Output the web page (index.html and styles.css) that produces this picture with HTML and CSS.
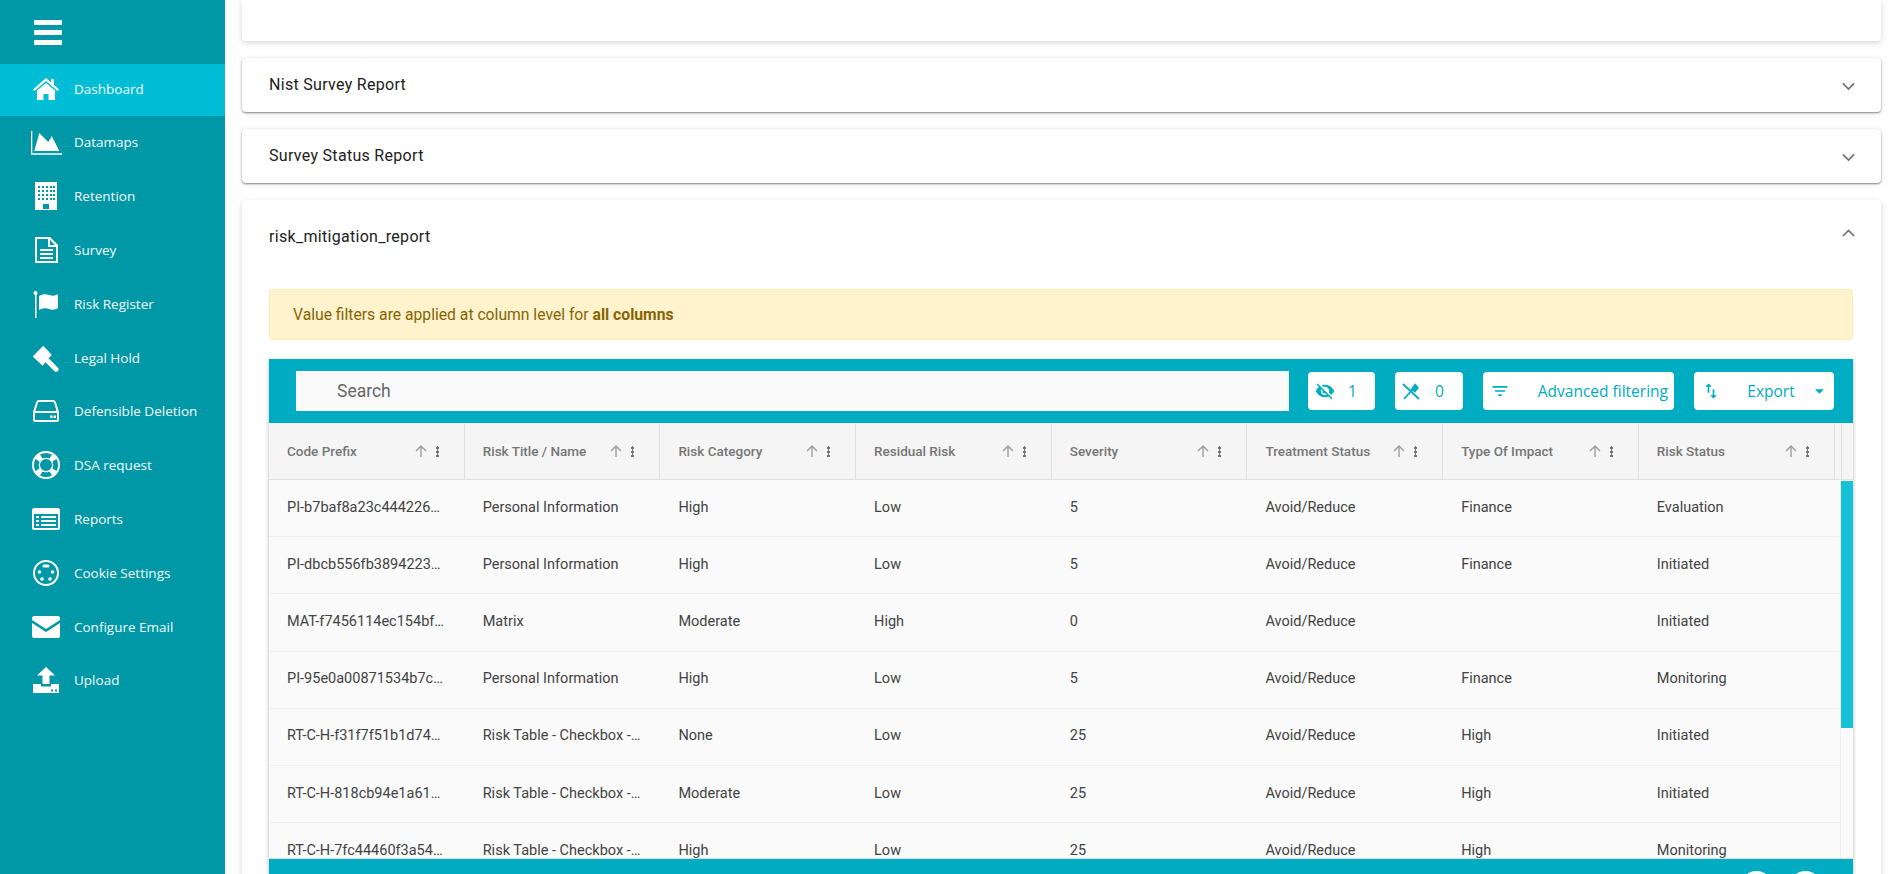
FILE: index.html
```html
<!DOCTYPE html>
<html lang="en">
<head>
<meta charset="utf-8">
<title>risk_mitigation_report</title>
<link rel="stylesheet" href="styles.css">
</head>
<body>
<aside class="sidebar">
  <div class="burger"><span></span><span></span><span></span></div>
  <nav class="nav">
    <a class="item active"><svg class="ic" viewBox="0 0 28 28"><path d="M14 3 1 14.500l1.500 1.500L14 6l11.500 10 1.500-1.500L22 10V4h-3v3.500z"/><path d="M14 8 5 15.500V25h6.500v-6h5v6H23v-9.500z"/></svg><span>Dashboard</span></a>
    <a class="item"><svg class="ic ic-wide" viewBox="0 0 32 28"><path d="M1 3h1.300v22.300H32V26.800H1z"/><path d="M4.300 23 9.300 5l9 9 3.400-6 7.600 15z"/></svg><span>Datamaps</span></a>
    <a class="item"><svg class="ic" viewBox="0 0 28 28"><path fill-rule="evenodd" d="M3 0h22v28H3zM6 4v2h2V4zm4 0v2h2V4zm4 0v2h2V4zm4 0v2h2V4zm3 0v2h2V4zM6 8v2h2V8zm4 0v2h2V8zm4 0v2h2V8zm4 0v2h2V8zm3 0v2h2V8zM6 12v2h2v-2zm4 0v2h2v-2zm4 0v2h2v-2zm4 0v2h2v-2zm3 0v2h2v-2zM6 16v2h2v-2zm4 0v2h2v-2zm4 0v2h2v-2zm4 0v2h2v-2zm3 0v2h2v-2zM11 22v5h6v-5z"/></svg><span>Retention</span></a>
    <a class="item"><svg class="ic" viewBox="0 0 28 28"><path fill-rule="evenodd" d="M3 1h15l8 8v18H3zM5 3v22h19V11h-8V3zm13 1v5h5z"/><path d="M8 13h13v2H8zm0 4h13v2H8zm0 4h13v2H8z"/></svg><span>Survey</span></a>
    <a class="item"><svg class="ic" viewBox="0 0 28 28"><circle cx="3.500" cy="3" r="2"/><path d="M3 3h1.500v25H3z"/><path d="M7 6c4-2 6-2 10-1s6 1 9-1v14c-3 2-6 2-9 1s-6-1-10 1z"/></svg><span>Risk Register</span></a>
    <a class="item"><svg class="ic" viewBox="0 0 28 28"><path d="M11.300 1.800 19.700 10.800 10.700 21.800.7 12.500z"/><path class="handle" d="M16.300 17.500 24 25.200"/></svg><span>Legal Hold</span></a>
    <a class="item"><svg class="ic" viewBox="0 0 28 28"><path fill-rule="evenodd" d="M7 3h14c1.500 0 2.500 1 3 2.500L27 15v8c0 1-1 2-2 2H3c-1 0-2-1-2-2v-8l3-9.500C4.500 4 5.500 3 7 3zm0 2c-.7 0-1 .4-1.200 1L3.500 14h21L22.200 6c-.2-.6-.5-1-1.200-1zM3 16v7h22v-7zm15 2.500h2.500V21H18zm3.500 0H24V21h-2.500z"/></svg><span>Defensible Deletion</span></a>
    <a class="item"><svg class="ic" viewBox="0 0 28 28"><path fill-rule="evenodd" d="M14 0a14 14 0 1 0 0 28 14 14 0 0 0 0-28zm0 8a6 6 0 1 1 0 12 6 6 0 0 1 0-12zM8 3.500l2.500 4a8 8 0 0 1 7 0l2.500-4a13 13 0 0 0-12 0zM3.500 8l4 2.500a8 8 0 0 0 0 7l-4 2.500a13 13 0 0 1 0-12zm21 0-4 2.500a8 8 0 0 1 0 7l4 2.500a13 13 0 0 0 0-12zM8 24.500l2.500-4a8 8 0 0 0 7 0l2.500 4a13 13 0 0 1-12 0z"/></svg><span>DSA request</span></a>
    <a class="item"><svg class="ic" viewBox="0 0 28 22"><path fill-rule="evenodd" d="M2 0h24c1 0 2 1 2 2v18c0 1-1 2-2 2H2c-1 0-2-1-2-2V2C0 1 1 0 2 0zM2 6v14h24V6zm2 2h3v2H4zm5 0h15v2H9zM4 12h3v2H4zm5 0h15v2H9zM4 16h3v2H4zm5 0h15v2H9z"/></svg><span>Reports</span></a>
    <a class="item"><svg class="ic" viewBox="0 0 28 28"><path fill-rule="evenodd" d="M14 1a13 13 0 1 0 0 26 13 13 0 0 0 0-26zm0 2a11 11 0 1 1 0 22 11 11 0 0 1 0-22z"/><rect x="10.500" y="5.500" width="7" height="3" rx="1.500"/><circle cx="7.500" cy="13" r="1.800"/><circle cx="20.500" cy="13" r="1.800"/><circle cx="10" cy="20" r="1.800"/><circle cx="18" cy="20" r="1.800"/></svg><span>Cookie Settings</span></a>
    <a class="item"><svg class="ic" viewBox="0 0 28 22"><path d="M2 0h24c1 0 2 1 2 2v2L14 13 0 4V2C0 1 1 0 2 0z"/><path d="M0 7l14 9 14-9v13c0 1-1 2-2 2H2c-1 0-2-1-2-2z"/></svg><span>Configure Email</span></a>
    <a class="item"><svg class="ic" viewBox="0 0 28 26"><path d="M14 0l9 8.500h-5.500V17h-7V8.500H5z"/><path fill-rule="evenodd" d="M1 17h8v2.500h10V17h8v9H1zm18 5.500v2h2v-2zm4 0v2h2v-2z"/></svg><span>Upload</span></a>
  </nav>
</aside>
<main class="main">
  <section class="card card-empty"></section>
  <section class="card panel">
    <h2>Nist Survey Report</h2>
    <svg class="chev" viewBox="0 0 14 9"><path d="M1 1.500l6 6 6-6"/></svg>
  </section>
  <section class="card panel">
    <h2>Survey Status Report</h2>
    <svg class="chev" viewBox="0 0 14 9"><path d="M1 1.500l6 6 6-6"/></svg>
  </section>
  <section class="card open">
    <div class="open-head">
      <h2>risk_mitigation_report</h2>
      <svg class="chev" viewBox="0 0 14 9"><path d="M1 7.500l6-6 6 6"/></svg>
    </div>
    <div class="alert"><span>Value filters are applied at column level for <b>all columns</b></span></div>
    <div class="table">
      <div class="toolbar">
        <div class="search">Search</div>
        <div class="btn b-count"><svg class="bi" viewBox="0 0 24 24"><path d="M12 7a5 5 0 0 1 5 5c0 .65-.13 1.260-.36 1.830l2.920 2.920A11.800 11.800 0 0 0 23 12c-1.730-4.390-6-7.500-11-7.500-1.400 0-2.740.25-3.980.7l2.160 2.160C10.740 7.130 11.350 7 12 7zM2 4.270l2.740 2.740A11.800 11.800 0 0 0 1 12c1.730 4.390 6 7.500 11 7.500 1.550 0 3.030-.3 4.380-.84l.42.42L19.730 22 21 20.730 3.270 3 2 4.270zM7.530 9.800l1.550 1.550A2.800 2.800 0 0 0 9 12a3 3 0 0 0 3 3c.22 0 .44-.03.65-.08l1.550 1.550c-.67.33-1.410.53-2.200.53a5 5 0 0 1-5-5c0-.79.2-1.530.53-2.200z"/></svg><span>1</span></div>
        <div class="btn b-count"><svg class="bi" viewBox="0 0 24 24"><path d="M20.400 8 15.600 2.800 10.400 10l5.200 4z"/><path class="ln" d="M1.200 3.600 20.400 21.600M2.400 21.600 13.200 9.600"/></svg><span>0</span></div>
        <div class="btn b-filter"><svg class="bi" viewBox="0 0 24 24"><path d="M3 6h18v2H3zm3 5h12v2H6zm4 5h4v2h-4z"/></svg><span class="grow">Advanced filtering</span></div>
        <div class="btn b-export"><svg class="bi" viewBox="0 0 24 24"><path d="M9 3 5 7h3v7h2V7h3zm7 14v-7h-2v7h-3l4 4 4-4z"/></svg><span class="grow">Export</span><svg class="caret" viewBox="0 0 10 5"><path d="M0 0h10L5 5z"/></svg></div>
      </div>
      <div class="thead">
        <div class="th"><span>Code Prefix</span><svg class="sort" viewBox="0 0 14 14"><path d="M7 1 1.500 6.500l1 1L6.300 3.700V13h1.400V3.700l3.800 3.800 1-1z"/></svg><i class="dots"></i></div>
        <div class="th"><span>Risk Title / Name</span><svg class="sort" viewBox="0 0 14 14"><path d="M7 1 1.500 6.500l1 1L6.300 3.700V13h1.400V3.700l3.800 3.800 1-1z"/></svg><i class="dots"></i></div>
        <div class="th"><span>Risk Category</span><svg class="sort" viewBox="0 0 14 14"><path d="M7 1 1.500 6.500l1 1L6.300 3.700V13h1.400V3.700l3.800 3.800 1-1z"/></svg><i class="dots"></i></div>
        <div class="th"><span>Residual Risk</span><svg class="sort" viewBox="0 0 14 14"><path d="M7 1 1.500 6.500l1 1L6.300 3.700V13h1.400V3.700l3.800 3.800 1-1z"/></svg><i class="dots"></i></div>
        <div class="th"><span>Severity</span><svg class="sort" viewBox="0 0 14 14"><path d="M7 1 1.500 6.500l1 1L6.300 3.700V13h1.400V3.700l3.800 3.800 1-1z"/></svg><i class="dots"></i></div>
        <div class="th"><span>Treatment Status</span><svg class="sort" viewBox="0 0 14 14"><path d="M7 1 1.500 6.500l1 1L6.300 3.700V13h1.400V3.700l3.800 3.800 1-1z"/></svg><i class="dots"></i></div>
        <div class="th"><span>Type Of Impact</span><svg class="sort" viewBox="0 0 14 14"><path d="M7 1 1.500 6.500l1 1L6.300 3.700V13h1.400V3.700l3.800 3.800 1-1z"/></svg><i class="dots"></i></div>
        <div class="th"><span>Risk Status</span><svg class="sort" viewBox="0 0 14 14"><path d="M7 1 1.500 6.500l1 1L6.300 3.700V13h1.400V3.700l3.800 3.800 1-1z"/></svg><i class="dots"></i></div>
        <div class="th-end"></div>
      </div>
      <div class="tbody">
        <div class="rows">
          <div class="tr"><div>PI-b7baf8a23c444226…</div><div>Personal Information</div><div>High</div><div>Low</div><div>5</div><div>Avoid/Reduce</div><div>Finance</div><div>Evaluation</div></div>
          <div class="tr"><div>PI-dbcb556fb3894223…</div><div>Personal Information</div><div>High</div><div>Low</div><div>5</div><div>Avoid/Reduce</div><div>Finance</div><div>Initiated</div></div>
          <div class="tr"><div>MAT-f7456114ec154bf…</div><div>Matrix</div><div>Moderate</div><div>High</div><div>0</div><div>Avoid/Reduce</div><div></div><div>Initiated</div></div>
          <div class="tr"><div>PI-95e0a00871534b7c…</div><div>Personal Information</div><div>High</div><div>Low</div><div>5</div><div>Avoid/Reduce</div><div>Finance</div><div>Monitoring</div></div>
          <div class="tr"><div>RT-C-H-f31f7f51b1d74…</div><div>Risk Table - Checkbox -…</div><div>None</div><div>Low</div><div>25</div><div>Avoid/Reduce</div><div>High</div><div>Initiated</div></div>
          <div class="tr"><div>RT-C-H-818cb94e1a61…</div><div>Risk Table - Checkbox -…</div><div>Moderate</div><div>Low</div><div>25</div><div>Avoid/Reduce</div><div>High</div><div>Initiated</div></div>
          <div class="tr"><div>RT-C-H-7fc44460f3a54…</div><div>Risk Table - Checkbox -…</div><div>High</div><div>Low</div><div>25</div><div>Avoid/Reduce</div><div>High</div><div>Monitoring</div></div>
        </div>
        <div class="scroll"><div class="thumb"></div></div>
      </div>
      <div class="tfoot"><span class="fab"></span><span class="fab"></span></div>
    </div>
  </section>
</main>
</body>
</html>
```
FILE: styles.css
```css
* { box-sizing: border-box; }
html, body { margin: 0; height: 874px; overflow: hidden; }
body { display: flex; background: #fff; font-family: Roboto, "Liberation Sans", sans-serif; color: #212529; }

.sidebar { width: 225px; flex: none; height: 874px; background: #0097a7; color: #fff; }
.burger { height: 64px; padding: 20px 0 0 34px; display: flex; flex-direction: column; gap: 5px; }
.burger span { width: 28px; height: 5px; background: #fff; border-radius: 1px; }
.nav { display: flex; flex-direction: column; }
.item { display: flex; align-items: center; height: 53.800px; padding: 0 0 3px 32px; font: 400 13.500px "Open Sans", sans-serif; color: #f4fbfb; }
.item.active { background: #00bcd4; height: 52px; margin-bottom: 1px; }
.ic { width: 28px; height: 28px; flex: none; margin-right: 14px; fill: #fff; }
.ic-wide { width: 32px; margin-left: -2px; margin-right: 12px; }
.handle { fill: none; stroke: #fff; stroke-width: 5; stroke-linecap: round; }

.main { flex: 1; min-width: 0; padding: 0 13px 0 17px; }
.card { background: #fff; border-radius: 4px; box-shadow: 0 2px 6px rgba(0,0,0,.16); }
.card-empty { height: 41px; margin-bottom: 17px; border-radius: 0 0 4px 4px; }
.panel { height: 54px; margin-bottom: 17px; padding: 0 26px 2px 27px; display: flex; align-items: center; justify-content: space-between; box-shadow: 0 1px 2px rgba(0,0,0,.45), 0 1px 6px rgba(0,0,0,.1); }
h2 { margin: 0; font: 400 16px Roboto, sans-serif; letter-spacing: .3px; color: #212121; }
.chev { width: 13px; height: 8.400px; fill: none; stroke: #6f6f6f; stroke-width: 1.800; margin-top: 5px; }
.open { height: 700px; padding: 0 28px 0 27px; }
.open-head { height: 89px; padding-bottom: 16px; display: flex; align-items: center; justify-content: space-between; }
.open-head .chev { margin-top: -6px; margin-right: -2px; }

.alert { height: 51px; padding: 0 23px; display: flex; align-items: center; background: #fff3cd; border: 1px solid #ffeeba; border-radius: 3px; color: #856404; font-size: 15.700px; }
.alert b { font-weight: 700; }

.table { margin-top: 19px; height: 516px; display: flex; flex-direction: column; overflow: hidden; background: #fafafa; box-shadow: 0 1px 4px rgba(0,0,0,.3); }
.toolbar { height: 64px; flex: none; background: #00acc1; display: flex; align-items: center; padding: 0 19px 0 27px; }
.search { flex: 1; height: 40px; margin-right: 19px; padding-left: 41px; background: #fafafa; display: flex; align-items: center; font-size: 17.500px; color: #666; }
.btn { height: 38px; flex: none; background: #fff; border-radius: 4px; display: flex; align-items: center; padding: 0 6px; color: #00acc1; font: 400 15.500px "Open Sans", sans-serif; }
.btn + .btn { margin-left: 20px; }
.b-count { width: 67px; }
.b-count span { margin-left: 13px; }
.b-count + .b-count { width: 68px; }
.b-filter { width: 191px; }
.b-export { width: 140px; padding-right: 10px; }
.bi { width: 20px; height: 20px; fill: #00acc1; flex: none; margin-left: 1px; }
.ln { fill: none; stroke: #00acc1; stroke-width: 2.200; }
.grow { flex: 1; text-align: right; white-space: nowrap; }
.b-export .grow { text-align: center; padding-left: 12px; }
.caret { width: 9px; height: 5px; fill: #00acc1; margin-left: 6px; }

.thead, .tr { display: grid; grid-template-columns: repeat(8, 195.700px) 1fr; }
.thead { height: 57px; flex: none; background: #f5f5f5; border-bottom: 1px solid #e0e0e0; }
.th { display: flex; align-items: center; padding-left: 18px; border-right: 1px solid #e0e0e0; font-size: 13.500px; font-weight: 500; color: #757575; }
.th span { flex: 1; white-space: nowrap; }
.th-end { border-right: 1px solid #e0e0e0; width: 7px; }
.sort { width: 14px; height: 14px; fill: #9e9e9e; flex: none; margin-right: 8px; }
.dots { width: 3px; height: 11px; flex: none; margin-right: 25px; background: radial-gradient(circle, #757575 1.500px, transparent 1.600px) 0 0 / 3px 4px repeat-y; }

.tbody { flex: 1; display: flex; min-height: 0; overflow: hidden; }
.rows { flex: 1; min-width: 0; }
.tr { height: 57.200px; border-bottom: 1px solid #eee; border-right: 1px solid #eee; }
.tr > div { display: flex; align-items: center; padding: 0 0 2px 18px; font-size: 14.500px; color: #424242; white-space: nowrap; overflow: hidden; }
.scroll { width: 12px; flex: none; background: #fafafa; }
.thumb { margin-top: 1px; height: 247px; background: #14c1d7; }
.tfoot { height: 17px; flex: none; background: #00acc1; border-top: 1px solid #ddd; display: flex; justify-content: flex-end; gap: 16px; padding: 12px 31px 0 0; }
.fab { width: 33px; height: 33px; flex: none; border-radius: 50%; background: #fff; }
```
